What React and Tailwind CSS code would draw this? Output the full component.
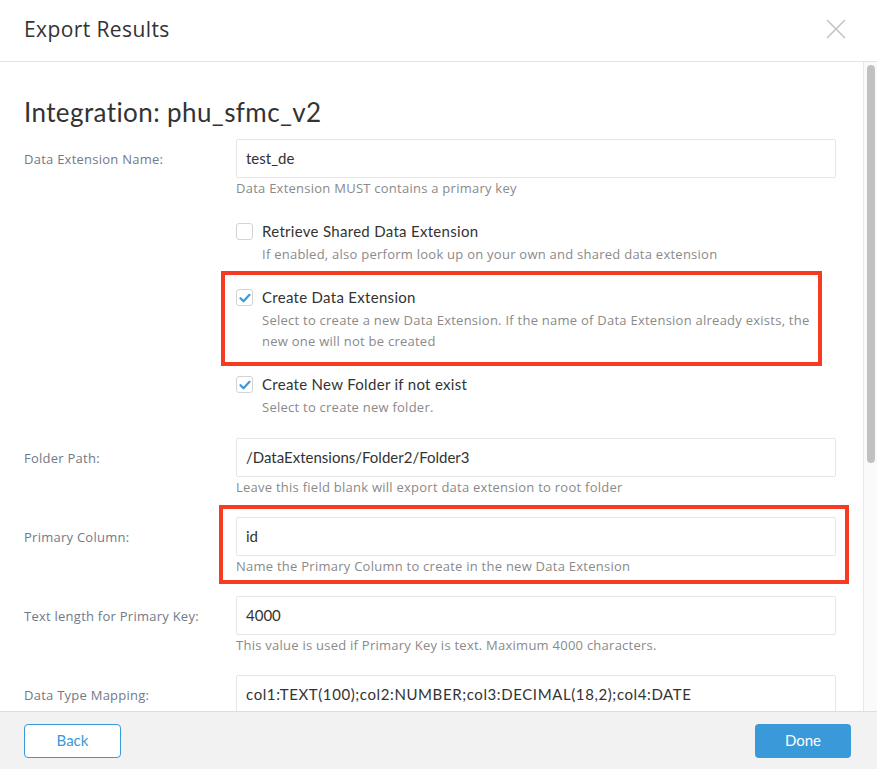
import React from "react";

const lato = { fontFamily: "Lato, 'Open Sans', 'Noto Sans', sans-serif" };
const open = { fontFamily: "'Open Sans', Lato, 'Noto Sans', sans-serif" };

function Check({ checked }) {
  return (
    <div className="w-[17px] h-[17px] shrink-0 rounded-[3px] border border-[#d4d4d4] bg-white flex items-center justify-center mt-[3px]">
      {checked && (
        <svg width="12" height="10" viewBox="0 0 12 10" fill="none">
          <path d="M1.5 5.2 L4.5 8.2 L10.5 1.8" stroke="#3a99d8" strokeWidth="2.2" strokeLinecap="round" strokeLinejoin="round" />
        </svg>
      )}
    </div>
  );
}

function CheckItem({ checked, title, desc, children }) {
  return (
    <div className="relative flex gap-[9px]">
      <Check checked={checked} />
      <div>
        <div className="text-[15px] leading-[22px] tracking-[0.3px] text-[#333]" style={lato}>{title}</div>
        <div className="mt-[2px] text-[13px] leading-[21px] tracking-[0.25px] text-[#8a8a8a]" style={open}>{desc}</div>
      </div>
      {children}
    </div>
  );
}

function Field({ label, value, help, wide, children }) {
  return (
    <div className="flex">
      <div className="w-[212px] shrink-0 pt-[11px] text-[13px] leading-[18px] tracking-[0.25px] text-[#737987]" style={open}>{label}</div>
      <div className="relative flex-1">
        <div
          className={
            wide
              ? "h-[39px] border border-[#e6e6e6] rounded-[2px] bg-white flex items-center px-[9px] text-[15px] tracking-[0.6px] text-[#333]"
              : "h-[39px] border border-[#e6e6e6] rounded-[2px] bg-white flex items-center px-[9px] text-[15px] text-[#333]"
          }
          style={lato}
        >
          {value}
        </div>
        {help && <div className="text-[13px] leading-[20px] tracking-[0.25px] text-[#8a8a8a]" style={open}>{help}</div>}
        {children}
      </div>
    </div>
  );
}

export default function App() {
  return (
    <div className="w-[877px] h-[769px] bg-white flex flex-col overflow-hidden" style={lato}>
      <div className="h-[62px] shrink-0 border-b border-[#e3e3e3] flex items-center justify-between pl-[24px] pr-[30px]">
        <div className="text-[21px] tracking-[0.4px] text-[#333] leading-[26px] pb-[4px]" style={open}>Export Results</div>
        <svg width="22" height="22" viewBox="0 0 22 22" className="mb-[4px]">
          <path d="M2 2 L20 20 M20 2 L2 20" stroke="#c4c4c4" strokeWidth="1.6" />
        </svg>
      </div>
      <div className="flex flex-1 min-h-0">
        <div className="flex-1 overflow-hidden pl-[24px] pr-[27px] pt-[34px]">
          <div className="text-[26px] leading-[32px] tracking-[0.4px] text-[#333] mb-[11px]">Integration: phu_sfmc_v2</div>
          <Field label="Data Extension Name:" value="test_de" help="Data Extension MUST contains a primary key" />
          <div className="pl-[212px] pt-[22px] flex flex-col gap-[21px]">
            <CheckItem checked={false} title="Retrieve Shared Data Extension" desc="If enabled, also perform look up on your own and shared data extension" />
            <CheckItem
              checked
              title="Create Data Extension"
              desc={<>Select to create a new Data Extension. If the name of Data Extension already exists, the<br />new one will not be created</>}
            >
              <div className="absolute left-[-15px] top-[-15px] right-[14px] bottom-[-14px] border-[4px] border-[#f53b22] pointer-events-none" />
            </CheckItem>
            <CheckItem checked title="Create New Folder if not exist" desc="Select to create new folder." />
          </div>
          <div className="pt-[20px] flex flex-col gap-[20px]">
            <Field label="Folder Path:" value="/DataExtensions/Folder2/Folder3" help="Leave this field blank will export data extension to root folder" />
            <Field label="Primary Column:" value="id" help="Name the Primary Column to create in the new Data Extension">
              <div className="absolute left-[-17px] top-[-12px] right-[-13px] bottom-[-8px] border-[4px] border-[#f53b22] pointer-events-none" />
            </Field>
            <Field label="Text length for Primary Key:" value="4000" help="This value is used if Primary Key is text. Maximum 4000 characters." />
            <Field label="Data Type Mapping:" value="col1:TEXT(100);col2:NUMBER;col3:DECIMAL(18,2);col4:DATE" wide />
          </div>
        </div>
        <div className="w-[14px] shrink-0 border-l border-[#e8e8e8] bg-[#fafafa] pt-[3px] pl-[3px]">
          <div className="w-[8px] h-[398px] rounded-full bg-[#c1c1c1]" />
        </div>
      </div>
      <div className="h-[58px] shrink-0 border-t border-[#dedede] bg-[#f2f2f2] flex items-center justify-between pl-[24px] pr-[26px]">
        <button className="w-[97px] h-[34px] rounded-[4px] border border-[#3a99d8] bg-white text-[15px] text-[#3a99d8]">Back</button>
        <button className="w-[96px] h-[34px] rounded-[4px] bg-[#3a99d8] text-[15px] text-white">Done</button>
      </div>
    </div>
  );
}
